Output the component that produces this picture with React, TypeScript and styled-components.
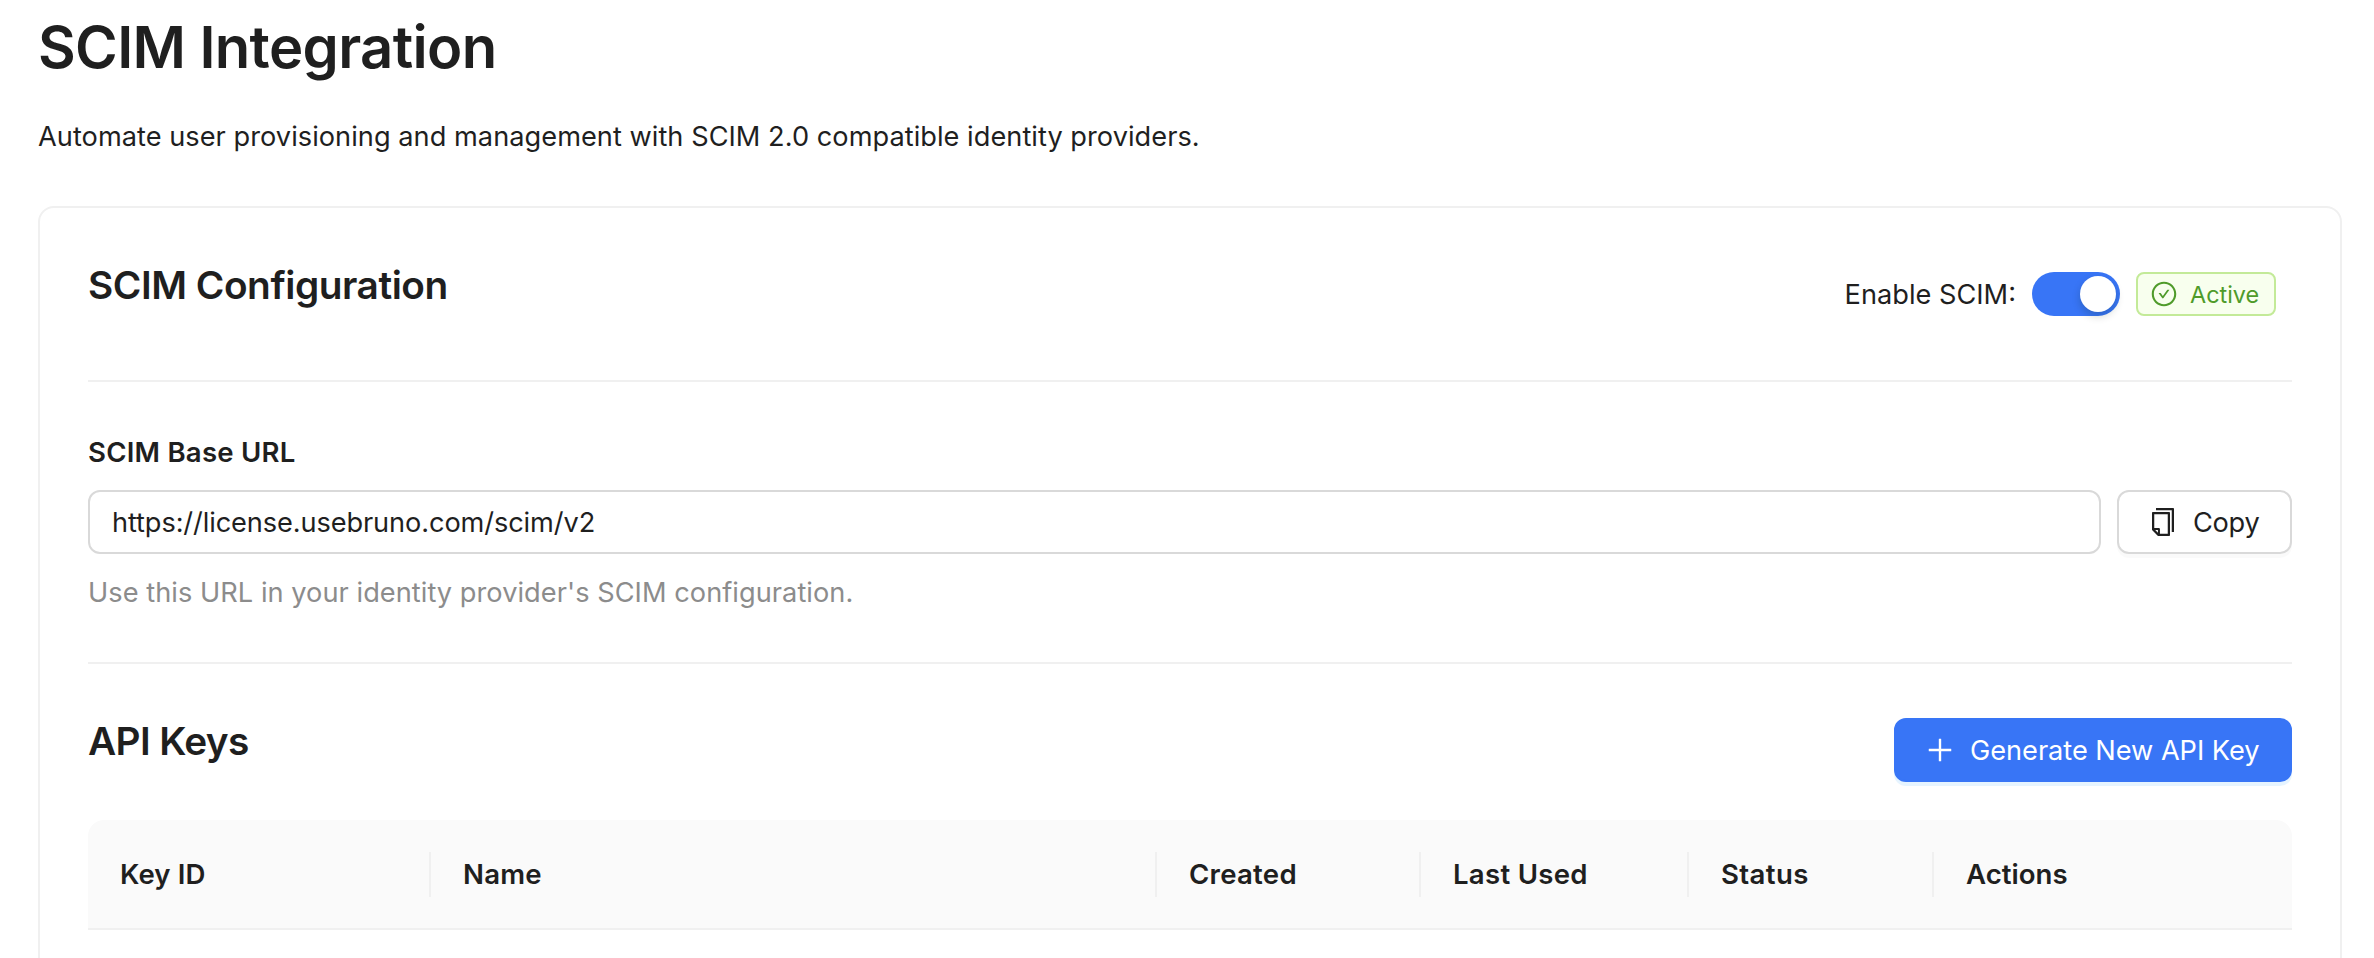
import React from 'react';
import styled, { createGlobalStyle } from 'styled-components';

const GlobalStyle = createGlobalStyle`
  * { box-sizing: border-box; }
  body {
    margin: 0;
    background: #fff;
    color: #1f1f1f;
    font-family: Inter, "Liberation Sans", sans-serif;
    font-size: 27.2px;
    line-height: 45px;
  }
`;

const Page = styled.main`
  height: 958px;
  overflow: hidden;
  padding: 10px 32px 0 38px;
`;

const PageTitle = styled.h1`
  margin: 0;
  font-size: 58px;
  font-weight: 600;
  line-height: 75px;
  letter-spacing: -0.65px;
`;

const Intro = styled.p`
  margin: 29px 0 47px;
  letter-spacing: 0.03px;
`;

const Card = styled.section`
  height: 800px;
  padding: 48px;
  border: 2px solid #f0f0f0;
  border-radius: 16px;
`;

const HeaderRow = styled.div`
  display: flex;
  justify-content: space-between;
  align-items: flex-start;
  height: 124px;
`;

const KeysRow = styled(HeaderRow)`
  height: 108px;
`;

const SectionTitle = styled.h2<{ $spacing: number }>`
  margin: 1px 0 0;
  font-size: 38.8px;
  font-weight: 600;
  line-height: 55px;
  letter-spacing: ${(p) => p.$spacing}px;
`;

const StatusGroup = styled.div`
  display: flex;
  align-items: center;
  gap: 16px;
  height: 44px;
  margin: 16px 16px 0 0;
`;

const Switch = styled.button`
  display: flex;
  justify-content: flex-end;
  width: 88px;
  height: 44px;
  padding: 4px;
  border: 0;
  border-radius: 22px;
  background: #3875f6;
`;

const Knob = styled.span`
  width: 36px;
  height: 36px;
  border-radius: 50%;
  background: #fff;
  box-shadow: 0 4px 8px rgba(0, 35, 11, 0.2);
`;

const Tag = styled.span`
  display: flex;
  align-items: center;
  gap: 12px;
  width: 140px;
  height: 44px;
  padding-left: 12px;
  border: 2px solid #c3ea98;
  border-radius: 8px;
  background: #f8ffee;
  color: #4f9b2a;
  font-size: 23.4px;
  line-height: 40px;
`;

const TagText = styled.span`
  margin-top: 2px;
`;

const Divider = styled.hr`
  height: 2px;
  margin: 0;
  border: 0;
  background: #f0f0f0;
`;

const Field = styled.div`
  padding: 48px 0 47px;
`;

const Label = styled.div`
  font-size: 27.6px;
  font-weight: 600;
  letter-spacing: 0.22px;
`;

const InputRow = styled.div`
  display: flex;
  gap: 16px;
  margin: 15px 0 16px;
`;

const UrlBox = styled.div`
  display: flex;
  flex: 1;
  align-items: center;
  height: 64px;
  padding: 0 22px;
  border: 2px solid #d9d9d9;
  border-radius: 12px;
  letter-spacing: -0.11px;
`;

const Hint = styled.div`
  color: #8c8c8c;
  letter-spacing: 0.04px;
`;

const Button = styled.button<{ $primary?: boolean; $width: number; $spacing: number }>`
  display: flex;
  align-items: center;
  gap: 14px;
  width: ${(p) => p.$width}px;
  height: 64px;
  padding: 0 0 0 28px;
  border: 2px solid ${(p) => (p.$primary ? '#3875f6' : '#d9d9d9')};
  border-radius: 12px;
  background: ${(p) => (p.$primary ? '#3875f6' : '#fff')};
  box-shadow: 0 4px 0 ${(p) => (p.$primary ? 'rgba(5, 145, 255, 0.1)' : 'rgba(0, 0, 0, 0.02)')};
  color: ${(p) => (p.$primary ? '#fff' : '#1f1f1f')};
  font: inherit;
  letter-spacing: ${(p) => p.$spacing}px;
  white-space: nowrap;
`;

const KeysSection = styled.div`
  padding-top: 48px;

  ${Button} {
    margin-top: 6px;
  }
`;

const TableHead = styled.div`
  display: grid;
  grid-template-columns: 343px 726px 264px 268px 245px 1fr;
  align-items: center;
  height: 110px;
  border-bottom: 2px solid #f0f0f0;
  border-radius: 16px 16px 0 0;
  background: #fafafa;
  font-size: 27.6px;
  font-weight: 600;
`;

const HeadCell = styled.div<{ $spacing: number }>`
  height: 45px;
  padding-left: 32px;
  border-right: 2px solid #f0f0f0;
  letter-spacing: ${(p) => p.$spacing}px;

  &:last-child {
    border-right: 0;
  }
`;

const Icon = styled.svg.attrs({ viewBox: '0 0 1024 1024', fill: 'currentColor' })<{ $size: number }>`
  flex: none;
  width: ${(p) => p.$size}px;
  height: ${(p) => p.$size}px;
`;

const CheckCircleIcon = () => (
  <Icon $size={28}>
    <path d="M699 353h-46.900c-10.200 0-19.900 4.900-25.900 13.300L469 584.300l-71.200-98.800c-6-8.300-15.600-13.300-25.900-13.300H325c-6.500 0-10.300 7.400-6.500 12.700l124.600 172.800a31.800 31.800 0 0 0 51.700 0l210.600-292c3.900-5.300.1-12.700-6.400-12.700z" />
    <path d="M512 64C264.600 64 64 264.600 64 512s200.600 448 448 448 448-200.600 448-448S759.400 64 512 64zm0 820c-205.400 0-372-166.600-372-372s166.600-372 372-372 372 166.600 372 372-166.600 372-372 372z" />
  </Icon>
);

const CopyIcon = () => (
  <Icon $size={32}>
    <path d="M832 64H296c-4.400 0-8 3.600-8 8v56c0 4.400 3.600 8 8 8h496v688c0 4.400 3.600 8 8 8h56c4.400 0 8-3.600 8-8V96c0-17.700-14.300-32-32-32zM704 192H192c-17.700 0-32 14.300-32 32v530.700c0 8.500 3.400 16.600 9.400 22.600l173.300 173.300c2.200 2.200 4.700 4 7.400 5.500v1.900h4.200c3.500 1.300 7.200 2 11 2H704c17.700 0 32-14.300 32-32V224c0-17.700-14.300-32-32-32zM350 856.200L263.900 770H350v86.200zM664 888H414V746c0-22.100-17.900-40-40-40H232V264h432v624z" />
  </Icon>
);

const PlusIcon = () => (
  <Icon $size={32}>
    <path d="M482 152h60q8 0 8 8v704q0 8-8 8h-60q-8 0-8-8V160q0-8 8-8z" />
    <path d="M160 474h704q8 0 8 8v60q0 8-8 8H160q-8 0-8-8v-60q0-8 8-8z" />
  </Icon>
);

const columns = [
  { title: 'Key ID', spacing: 0.1 },
  { title: 'Name', spacing: 0.2 },
  { title: 'Created', spacing: 0.25 },
  { title: 'Last Used', spacing: 0.27 },
  { title: 'Status', spacing: 0.38 },
  { title: 'Actions', spacing: 0.02 },
];

export default function App() {
  return (
    <Page>
      <GlobalStyle />
      <PageTitle>SCIM Integration</PageTitle>
      <Intro>Automate user provisioning and management with SCIM 2.0 compatible identity providers.</Intro>
      <Card>
        <HeaderRow>
          <SectionTitle $spacing={-0.46}>SCIM Configuration</SectionTitle>
          <StatusGroup>
            <span>Enable SCIM:</span>
            <Switch role="switch" aria-checked="true">
              <Knob />
            </Switch>
            <Tag>
              <CheckCircleIcon />
              <TagText>Active</TagText>
            </Tag>
          </StatusGroup>
        </HeaderRow>
        <Divider />
        <Field>
          <Label>SCIM Base URL</Label>
          <InputRow>
            <UrlBox>https://license.usebruno.com/scim/v2</UrlBox>
            <Button $width={175} $spacing={-0.3}>
              <CopyIcon />
              Copy
            </Button>
          </InputRow>
          <Hint>Use this URL in your identity provider's SCIM configuration.</Hint>
        </Field>
        <Divider />
        <KeysSection>
          <KeysRow>
            <SectionTitle $spacing={-0.65}>API Keys</SectionTitle>
            <Button $primary $width={398} $spacing={-0.04}>
              <PlusIcon />
              Generate New API Key
            </Button>
          </KeysRow>
          <TableHead>
            {columns.map((c) => (
              <HeadCell key={c.title} $spacing={c.spacing}>
                {c.title}
              </HeadCell>
            ))}
          </TableHead>
        </KeysSection>
      </Card>
    </Page>
  );
}
